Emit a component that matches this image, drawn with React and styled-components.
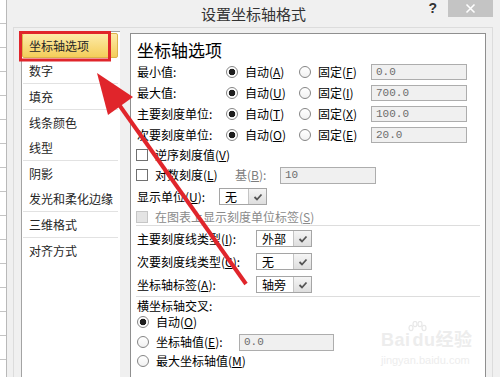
import React from "react";
import styled, { createGlobalStyle } from "styled-components";

const GlobalStyle = createGlobalStyle`
  html, body {
    margin: 0;
    padding: 0;
    background: #fff;
  }
  body {
    font-family: "Noto Sans CJK SC", "Noto Sans", sans-serif;
    font-size: 12px;
    line-height: 14px;
    color: #000;
  }
  * {
    box-sizing: border-box;
  }
`;

const Page = styled.div`
  position: relative;
  display: flex;
  width: 500px;
  height: 377px;
  overflow: hidden;
`;

const Sheet = styled.div`
  flex: none;
  width: 7px;
  background: #fff
    repeating-linear-gradient(to bottom, transparent 0 23px, #c4c4c4 23px 24px);
  border-right: 1px solid #b9b9b9;
`;

const Dialog = styled.div`
  flex: 1;
  display: flex;
  flex-direction: column;
  background: #f0f0f0;
  min-width: 0;
`;

const TitleBar = styled.div`
  flex: none;
  height: 27px;
  display: grid;
  grid-template-columns: 1fr auto 1fr;
  align-items: start;
`;

const Title = styled.div`
  grid-column: 2;
  font-size: 15px;
  line-height: 27px;
  color: #333;
`;

const TitleTools = styled.div`
  justify-self: end;
  display: flex;
  align-items: flex-start;
  margin-right: 7px;
`;

const Help = styled.span`
  font: bold 14px "Liberation Sans", sans-serif;
  line-height: 17px;
  color: #333;
  margin-right: 11px;
`;

const Close = styled.button`
  width: 45px;
  height: 17px;
  border: 0;
  padding: 0;
  background: #c4c4c4;
  display: flex;
  align-items: center;
  justify-content: center;
`;

const Frame = styled.div`
  flex: 1;
  display: flex;
  gap: 10px;
  margin: 0 7px 0 6px;
  padding: 3px 6px 0 7px;
  border: 1px solid #dcdcdc;
  border-bottom: 0;
  min-height: 0;
`;

const Nav = styled.ul`
  flex: none;
  width: 99px;
  margin: 0;
  padding: 1px 2px 0 0;
  list-style: none;
  background: #fff;
  border-left: 1px solid #a3a3a3;
  border-top: 1px solid #a3a3a3;
`;

const NavItem = styled.li`
  height: 25px;
  line-height: 23px;
  padding-left: 6px;
  font-size: 12px;
  color: #262626;
  white-space: nowrap;
  border: 1px solid ${(p) => (p.$active ? "#dcb24a" : "transparent")};
  border-radius: 2px;
  background: ${(p) =>
    p.$active ? "linear-gradient(#fdeba8, #f4cd5a)" : "transparent"};
`;

const NavDivider = styled.li`
  height: 1px;
  margin-left: 1px;
  background: #e2e2e2;
`;

const Panel = styled.section`
  flex: 1;
  margin-top: 2px;
  padding: 5px 5px 0 6px;
  background: #fff;
  border: 1px solid #8f8f8f;
  border-bottom: 0;
`;

const Heading = styled.h2`
  margin: 0;
  font-size: 17px;
  font-weight: normal;
  line-height: 22px;
`;

const ValueRow = styled.div`
  display: grid;
  grid-template-columns: 89px 73px 72px 96px;
  align-items: center;
  height: 21px;
`;

const Row = styled.div`
  display: flex;
  align-items: center;
  height: ${(p) => p.$h}px;
`;

const Label = styled.span`
  flex: none;
  width: ${(p) => (p.$w ? `${p.$w}px` : "auto")};
  line-height: 14px;
  color: ${(p) => (p.$muted ? "#7d7d7d" : "#000")};
  white-space: nowrap;
`;

const Option = styled.label`
  flex: none;
  display: inline-flex;
  align-items: center;
  gap: 7px;
  width: ${(p) => (p.$w ? `${p.$w}px` : "auto")};
  line-height: 14px;
  color: ${(p) => (p.$disabled ? "#8a8a8a" : "#000")};
  white-space: nowrap;
`;

const Key = styled.span`
  text-decoration: underline;
  text-underline-offset: 1px;
`;

const Radio = styled.span`
  flex: none;
  width: 12px;
  height: 12px;
  border-radius: 50%;
  border: 1px solid #858585;
  background: ${(p) =>
    p.$checked
      ? "radial-gradient(circle, #1e1e1e 0 3px, #fff 3.6px)"
      : "linear-gradient(#fff, #f1f1f1)"};
`;

const Check = styled.span`
  flex: none;
  width: 12px;
  height: 12px;
  margin-left: -1px;
  border: 1px solid ${(p) => (p.$disabled ? "#c6c6c6" : "#707070")};
  background: ${(p) => (p.$disabled ? "#e4e4e4" : "#fff")};
`;

const TextBox = styled.div`
  flex: none;
  width: ${(p) => p.$w}px;
  height: ${(p) => p.$h || 16}px;
  padding-left: 4px;
  border: 1px solid #adadad;
  background: #f0f0f0;
  color: #6d6d6d;
  font: 11px "Liberation Mono", monospace;
  line-height: ${(p) => (p.$h || 16) - 2}px;
`;

const Select = styled.div`
  flex: none;
  display: flex;
  width: ${(p) => p.$w}px;
  height: 17px;
  border: 1px solid #a5a5a5;
  background: #fff;
`;

const SelectText = styled.span`
  flex: 1;
  padding-left: 5px;
  line-height: 15px;
`;

const SelectButton = styled.span`
  flex: none;
  width: 18px;
  display: flex;
  align-items: center;
  justify-content: center;
  border-left: 1px solid #c4c4c4;
  background: linear-gradient(#f5f5f5, #dedede);
`;

const Divider = styled.div`
  height: 1px;
  margin: 0 0 1px -1px;
  background: #dddddd;
`;

const Watermark = styled.div`
  position: absolute;
  left: 381px;
  top: 331px;
  color: #ededed;
  font-family: "Liberation Sans", "Noto Sans CJK SC", sans-serif;
  pointer-events: none;
`;

const MarkLogo = styled.div`
  display: flex;
  align-items: flex-end;
  height: 18px;
  font-size: 18px;
  line-height: 18px;
  font-weight: bold;
  letter-spacing: 0.5px;
`;

const MarkUrl = styled.div`
  margin-top: 5px;
  font-size: 11px;
  line-height: 12px;
`;

const Annotation = styled.svg`
  position: absolute;
  left: 0;
  top: 0;
  pointer-events: none;
`;

const Chevron = () => (
  <svg width="10" height="8" viewBox="0 0 10 8">
    <path d="M1.5 4 L4 6.5 L8.5 1.5" fill="none" stroke="#555" strokeWidth="1.8" />
  </svg>
);

const Paw = () => (
  <svg width="20" height="14" viewBox="0 0 20 14" style={{ flex: "none", margin: "0 -14px 14px -4px" }}>
    <g fill="none" stroke="#e8e8e8" strokeWidth="1.2">
      <ellipse cx="4" cy="7" rx="2" ry="2.6" />
      <ellipse cx="8" cy="3" rx="2" ry="2.6" />
      <ellipse cx="13" cy="3" rx="2" ry="2.6" />
      <ellipse cx="17" cy="7" rx="2" ry="2.6" />
    </g>
  </svg>
);

const Dropdown = ({ width, value }) => (
  <Select $w={width}>
    <SelectText>{value}</SelectText>
    <SelectButton>
      <Chevron />
    </SelectButton>
  </Select>
);

const navGroups = [
  ["坐标轴选项", "数字"],
  ["填充"],
  ["线条颜色", "线型"],
  ["阴影", "发光和柔化边缘"],
  ["三维格式"],
  ["对齐方式"],
];

const valueRows = [
  { label: "最小值:", auto: "A", fixed: "F", value: "0.0" },
  { label: "最大值:", auto: "U", fixed: "I", value: "700.0" },
  { label: "主要刻度单位:", auto: "T", fixed: "X", value: "100.0" },
  { label: "次要刻度单位:", auto: "O", fixed: "E", value: "20.0" },
];

const tickRows = [
  { label: "主要刻度线类型", key: "I", value: "外部" },
  { label: "次要刻度线类型", key: "C", value: "无" },
  { label: "坐标轴标签", key: "A", value: "轴旁" },
];

export default function App() {
  return (
    <>
      <GlobalStyle />
      <Page>
        <Sheet />
        <Dialog>
          <TitleBar>
            <Title>设置坐标轴格式</Title>
            <TitleTools>
              <Help>?</Help>
              <Close aria-label="关闭">
                <svg width="11" height="11" viewBox="0 0 11 11">
                  <path d="M1.5 1.5 L9.5 9.5 M9.5 1.5 L1.5 9.5" stroke="#fff" strokeWidth="1.6" />
                </svg>
              </Close>
            </TitleTools>
          </TitleBar>
          <Frame>
            <Nav>
              {navGroups.map((group, gi) => (
                <React.Fragment key={gi}>
                  {gi > 0 && <NavDivider />}
                  {group.map((item) => (
                    <NavItem key={item} $active={item === "坐标轴选项"}>
                      {item}
                    </NavItem>
                  ))}
                </React.Fragment>
              ))}
            </Nav>
            <Panel>
              <Heading>坐标轴选项</Heading>
              {valueRows.map((r) => (
                <ValueRow key={r.label}>
                  <Label>{r.label}</Label>
                  <Option>
                    <Radio $checked />
                    <span>
                      自动(<Key>{r.auto}</Key>)
                    </span>
                  </Option>
                  <Option>
                    <Radio />
                    <span>
                      固定(<Key>{r.fixed}</Key>)
                    </span>
                  </Option>
                  <TextBox $w={96}>{r.value}</TextBox>
                </ValueRow>
              ))}
              <Row $h={20}>
                <Option>
                  <Check />
                  <span>
                    逆序刻度值(<Key>V</Key>)
                  </span>
                </Option>
              </Row>
              <Row $h={20}>
                <Option $w={98}>
                  <Check />
                  <span>
                    对数刻度(<Key>L</Key>)
                  </span>
                </Option>
                <Label $w={45} $muted>
                  基(<Key>B</Key>):
                </Label>
                <TextBox $w={96} $h={17}>
                  10
                </TextBox>
              </Row>
              <Row $h={23}>
                <Label $w={82}>
                  显示单位(<Key>U</Key>):
                </Label>
                <Dropdown width={48} value="无" />
              </Row>
              <Row $h={17}>
                <Option $disabled>
                  <Check $disabled />
                  <span>
                    在图表上显示刻度单位标签(<Key>S</Key>)
                  </span>
                </Option>
              </Row>
              <Divider />
              {tickRows.map((r) => (
                <Row $h={23} key={r.label}>
                  <Label $w={119}>
                    {r.label}(<Key>{r.key}</Key>):
                  </Label>
                  <Dropdown width={56} value={r.value} />
                </Row>
              ))}
              <Divider />
              <Row $h={15}>
                <Label>横坐标轴交叉:</Label>
              </Row>
              <Row $h={18}>
                <Option>
                  <Radio $checked />
                  <span>
                    自动(<Key>O</Key>)
                  </span>
                </Option>
              </Row>
              <Row $h={22}>
                <Option $w={102}>
                  <Radio />
                  <span>
                    坐标轴值(<Key>E</Key>):
                  </span>
                </Option>
                <TextBox $w={95} $h={17}>
                  0.0
                </TextBox>
              </Row>
              <Row $h={16}>
                <Option>
                  <Radio />
                  <span>
                    最大坐标轴值(<Key>M</Key>)
                  </span>
                </Option>
              </Row>
            </Panel>
          </Frame>
        </Dialog>
        <Watermark>
          <MarkLogo>
            Bai<Paw />du经验
          </MarkLogo>
          <MarkUrl>jingyan.baidu.com</MarkUrl>
        </Watermark>
        <Annotation width="500" height="377" viewBox="0 0 500 377">
          <rect x="20.5" y="32.5" width="89" height="27.5" fill="none" stroke="#e0252b" strokeWidth="3" />
          <line x1="246" y1="284" x2="115" y2="99" stroke="#e0252b" strokeWidth="4" />
          <polygon points="97,73 133,97 108,115" fill="#e0252b" />
        </Annotation>
      </Page>
    </>
  );
}
